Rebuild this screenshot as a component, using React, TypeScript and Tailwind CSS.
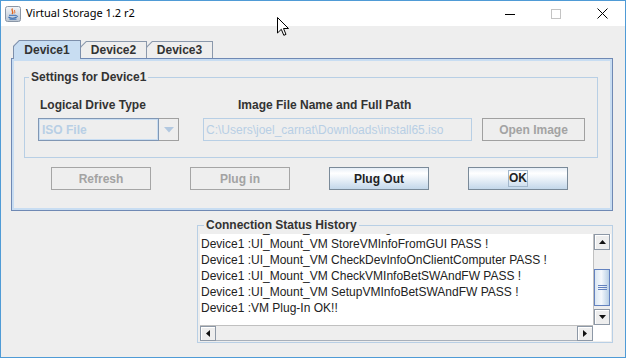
import React from "react";

function JavaIcon() {
  return (
    <svg width="16" height="16" viewBox="0 0 16 16">
      <defs>
        <linearGradient id="jg" x1="0" y1="0" x2="0" y2="1">
          <stop offset="0" stopColor="#f4f6f9" />
          <stop offset="1" stopColor="#b9c4d2" />
        </linearGradient>
      </defs>
      <rect x="0.5" y="0.5" width="15" height="15" rx="2" fill="url(#jg)" stroke="#8a96a6" />
      <path d="M7.5 2.5 C5.5 4.5 9.5 5.5 7 8" stroke="#e2641e" strokeWidth="1.3" fill="none" />
      <path d="M9.8 4 C8.8 5 10.6 6 9.4 7.4" stroke="#e2641e" strokeWidth="1" fill="none" />
      <path d="M4 9.3 H11" stroke="#3b6fb4" strokeWidth="1" />
      <path d="M3.5 11 C5 12.6 10 12.6 11.5 11" stroke="#3b6fb4" strokeWidth="1.1" fill="none" />
      <path d="M11 9.5 C13 9.5 13 11 11.3 11.2" stroke="#3b6fb4" strokeWidth="0.9" fill="none" />
      <path d="M4.5 13.2 H11.5" stroke="#3b6fb4" strokeWidth="1" />
    </svg>
  );
}

function Tab({ label, selected, w }: { label: string; selected?: boolean; w: string }) {
  const clip = "[clip-path:polygon(6px_0,100%_0,100%_100%,0_100%,0_6px)]";
  return (
    <div
      className={
        selected
          ? `relative z-10 h-[19px] -mb-px bg-[#7d8fab] px-px pt-px ${clip} ${w}`
          : `relative h-[17px] -ml-px bg-[#8a98ab] px-px pt-px ${clip} ${w}`
      }
    >
      <div
        className={`h-full flex items-center justify-center font-bold text-[12px] text-[#333333] [clip-path:polygon(5.5px_0,100%_0,100%_100%,0_100%,0_5.5px)] ${
          selected ? "bg-[#c8ddf2] pb-px" : "bg-[#eeeeee]"
        }`}
      >
        {label}
      </div>
    </div>
  );
}

function Btn({ label, enabled, focus }: { label: string; enabled?: boolean; focus?: boolean }) {
  if (!enabled) {
    return (
      <div className="w-[100px] h-[23px] border border-[#a5a5a5] flex items-center justify-center font-bold text-[12px] text-[#a3a3a3]">
        {label}
      </div>
    );
  }
  return (
    <div className="w-[100px] h-[23px] border border-[#7a8a99] bg-[linear-gradient(to_bottom,#e6eef7_0%,#ffffff_25%,#f4f8fc_40%,#c3d7ea_100%)] flex items-center justify-center font-bold text-[12px] text-[#222222]">
      {focus ? (
        <span className="border border-[#a3b8cc] leading-[15px] px-0">{label}</span>
      ) : (
        label
      )}
    </div>
  );
}

function ScrollBtn({ dir }: { dir: "up" | "down" | "left" | "right" }) {
  const tri: Record<string, string> = {
    up: "M1 5 L4.5 1 L8 5 Z",
    down: "M1 1 L4.5 5 L8 1 Z",
    left: "M5 1 L1 4.5 L5 8 Z",
    right: "M1 1 L5 4.5 L1 8 Z",
  };
  const horiz = dir === "left" || dir === "right";
  return (
    <div className="w-full h-full border border-[#8d98a6] bg-[#eeeeee] shadow-[inset_1px_1px_0_#ffffff] flex items-center justify-center">
      <svg width={horiz ? 6 : 9} height={horiz ? 9 : 6} viewBox={horiz ? "0 0 6 9" : "0 0 9 6"}>
        <path d={tri[dir]} fill="#111111" />
      </svg>
    </div>
  );
}

export default function App() {
  const lines = [
    "Device1 :UI_Mount_VM CheckImageFile PASS !",
    "Device1 :UI_Mount_VM StoreVMInfoFromGUI PASS !",
    "Device1 :UI_Mount_VM CheckDevInfoOnClientComputer PASS !",
    "Device1 :UI_Mount_VM CheckVMInfoBetSWAndFW PASS !",
    "Device1 :UI_Mount_VM SetupVMInfoBetSWAndFW PASS !",
    "Device1 :VM Plug-In OK!!",
  ];
  return (
    <div className="w-[626px] h-[358px] bg-[#eeeeee] border border-[#4f9bd6] flex flex-col relative overflow-hidden font-['Liberation_Sans',Arial,sans-serif] text-[12px] text-[#333333]">
      {/* Title bar */}
      <div className="h-[25px] bg-white flex items-center shrink-0">
        <div className="pl-[4px] flex items-center">
          <JavaIcon />
        </div>
        <div className="ml-[5px] text-[11px] text-black font-['Noto_Sans',sans-serif]">
          Virtual Storage 1.2 r2
        </div>
        <div className="ml-auto flex h-full">
          <div className="w-[46px] h-full flex items-center justify-center">
            <svg width="10" height="10" viewBox="0 0 10 10">
              <path d="M0 5.5 H10" stroke="#000" strokeWidth="1" />
            </svg>
          </div>
          <div className="w-[46px] h-full flex items-center justify-center">
            <svg width="10" height="10" viewBox="0 0 10 10">
              <rect x="0.5" y="0.5" width="9" height="9" fill="none" stroke="#c4c4c4" />
            </svg>
          </div>
          <div className="w-[46px] h-full flex items-center justify-center">
            <svg width="11" height="11" viewBox="0 0 11 11">
              <path d="M0.5 0.5 L10.5 10.5 M10.5 0.5 L0.5 10.5" stroke="#000" strokeWidth="1" />
            </svg>
          </div>
        </div>
      </div>

      {/* Body */}
      <div className="flex-1 flex flex-col pt-[14px]">
        {/* Tabs */}
        <div className="flex items-end pl-[12px] h-[18px]">
          <Tab label="Device1" selected w="w-[68px]" />
          <Tab label="Device2" w="w-[67px]" />
          <Tab label="Device3" w="w-[67px]" />
        </div>
        {/* Tab panel */}
        <div className="ml-[10px] w-[602px] h-[153px] border border-[#6f89b4]">
          <div className="h-full border-2 border-[#c8ddf2] flex flex-col">
            <fieldset className="ml-[10px] mt-[9px] w-[574px] border border-[#b8cfe5] pb-[16px]">
              <legend className="ml-[4px] px-[2px] font-bold leading-[14px] text-[#333333]">
                Settings for Device1
              </legend>
              <div className="flex pl-[14px] mt-[14px] font-bold leading-[14px] text-[#333333]">
                <div className="w-[199px] pl-px">Logical Drive Type</div>
                <div>Image File Name and Full Path</div>
              </div>
              <div className="flex pl-[13px] mt-[6px]">
                <div className="flex h-[23px]">
                  <div className="w-[121px] h-full border border-[#8197b4] shadow-[inset_0_0_0_1px_#c8ddf2] flex items-center pl-[3px] font-bold text-[#b8cfe5]">
                    ISO File
                  </div>
                  <div className="w-[20px] h-full border-y border-r border-[#a0a0a0] flex items-center justify-center">
                    <svg width="10" height="6" viewBox="0 0 10 6">
                      <path d="M0 0 H10 L5 5.5 Z" fill="#b2c8e0" />
                    </svg>
                  </div>
                </div>
                <div className="ml-[24px] w-[269px] h-[23px] border border-[#b8cfe5] flex items-center pl-[2px] text-[#b8cfe5]">
                  C:\Users\joel_carnat\Downloads\install65.iso
                </div>
                <div className="ml-[10px] w-[103px] h-[23px] border border-[#a0a0a0] flex items-center justify-center font-bold text-[#a3a3a3]">
                  Open Image
                </div>
              </div>
            </fieldset>
            <div className="flex pl-[37px] mt-[9px] gap-[39px]">
              <Btn label="Refresh" />
              <Btn label="Plug in" />
              <Btn label="Plug Out" enabled />
              <Btn label="OK" enabled focus />
            </div>
          </div>
        </div>

        {/* Connection Status History */}
        <fieldset className="ml-[196px] mt-[7px] w-[416px] border border-[#b8cfe5] pl-[2px] pr-[1px] pb-px">
          <legend className="ml-[4px] px-[2px] font-bold leading-[14px] text-[#333333]">
            Connection Status History
          </legend>
          <div className="mt-[2px] grid grid-cols-[393px_17px] grid-rows-[91px_16px] bg-white">
            <div className="overflow-hidden bg-white">
              <div className="-mt-[14px] pl-px text-[12px] leading-[16px] text-[#222222] whitespace-nowrap">
                {lines.map((l, i) => (
                  <div key={i}>{l}</div>
                ))}
              </div>
            </div>
            <div className="flex flex-col bg-[#eeeeee] border-l border-[#c0c0c0]">
              <div className="h-[16px]">
                <ScrollBtn dir="up" />
              </div>
              <div className="h-[19px]" />
              <div className="h-[37px] border border-[#6382bf] bg-[linear-gradient(to_right,#dbe7f3,#f4f8fc_45%,#b8cfe5)] flex flex-col items-center justify-center gap-[1px]">
                <div className="w-[9px] h-px bg-[#6382bf]" />
                <div className="w-[9px] h-px bg-[#6382bf]" />
                <div className="w-[9px] h-px bg-[#6382bf]" />
              </div>
              <div className="h-[3px]" />
              <div className="h-[16px]">
                <ScrollBtn dir="down" />
              </div>
            </div>
            <div className="flex bg-[#eeeeee] border-t border-[#c0c0c0]">
              <div className="w-[16px] h-full">
                <ScrollBtn dir="left" />
              </div>
              <div className="flex-1 border-b border-[#a8b0ba]" />
              <div className="w-[16px] h-full">
                <ScrollBtn dir="right" />
              </div>
            </div>
            <div className="bg-white" />
          </div>
        </fieldset>
      </div>

      {/* Mouse cursor */}
      <svg className="absolute left-[276px] top-[16px]" width="13" height="20" viewBox="0 0 13 20">
        <path
          d="M0.5 0.5 L0.5 16 L4.3 12.3 L6.8 18.3 L9 17.4 L6.5 11.5 L11.5 11.5 Z"
          fill="#ffffff"
          stroke="#000000"
          strokeWidth="1"
          strokeLinejoin="miter"
        />
      </svg>
    </div>
  );
}
